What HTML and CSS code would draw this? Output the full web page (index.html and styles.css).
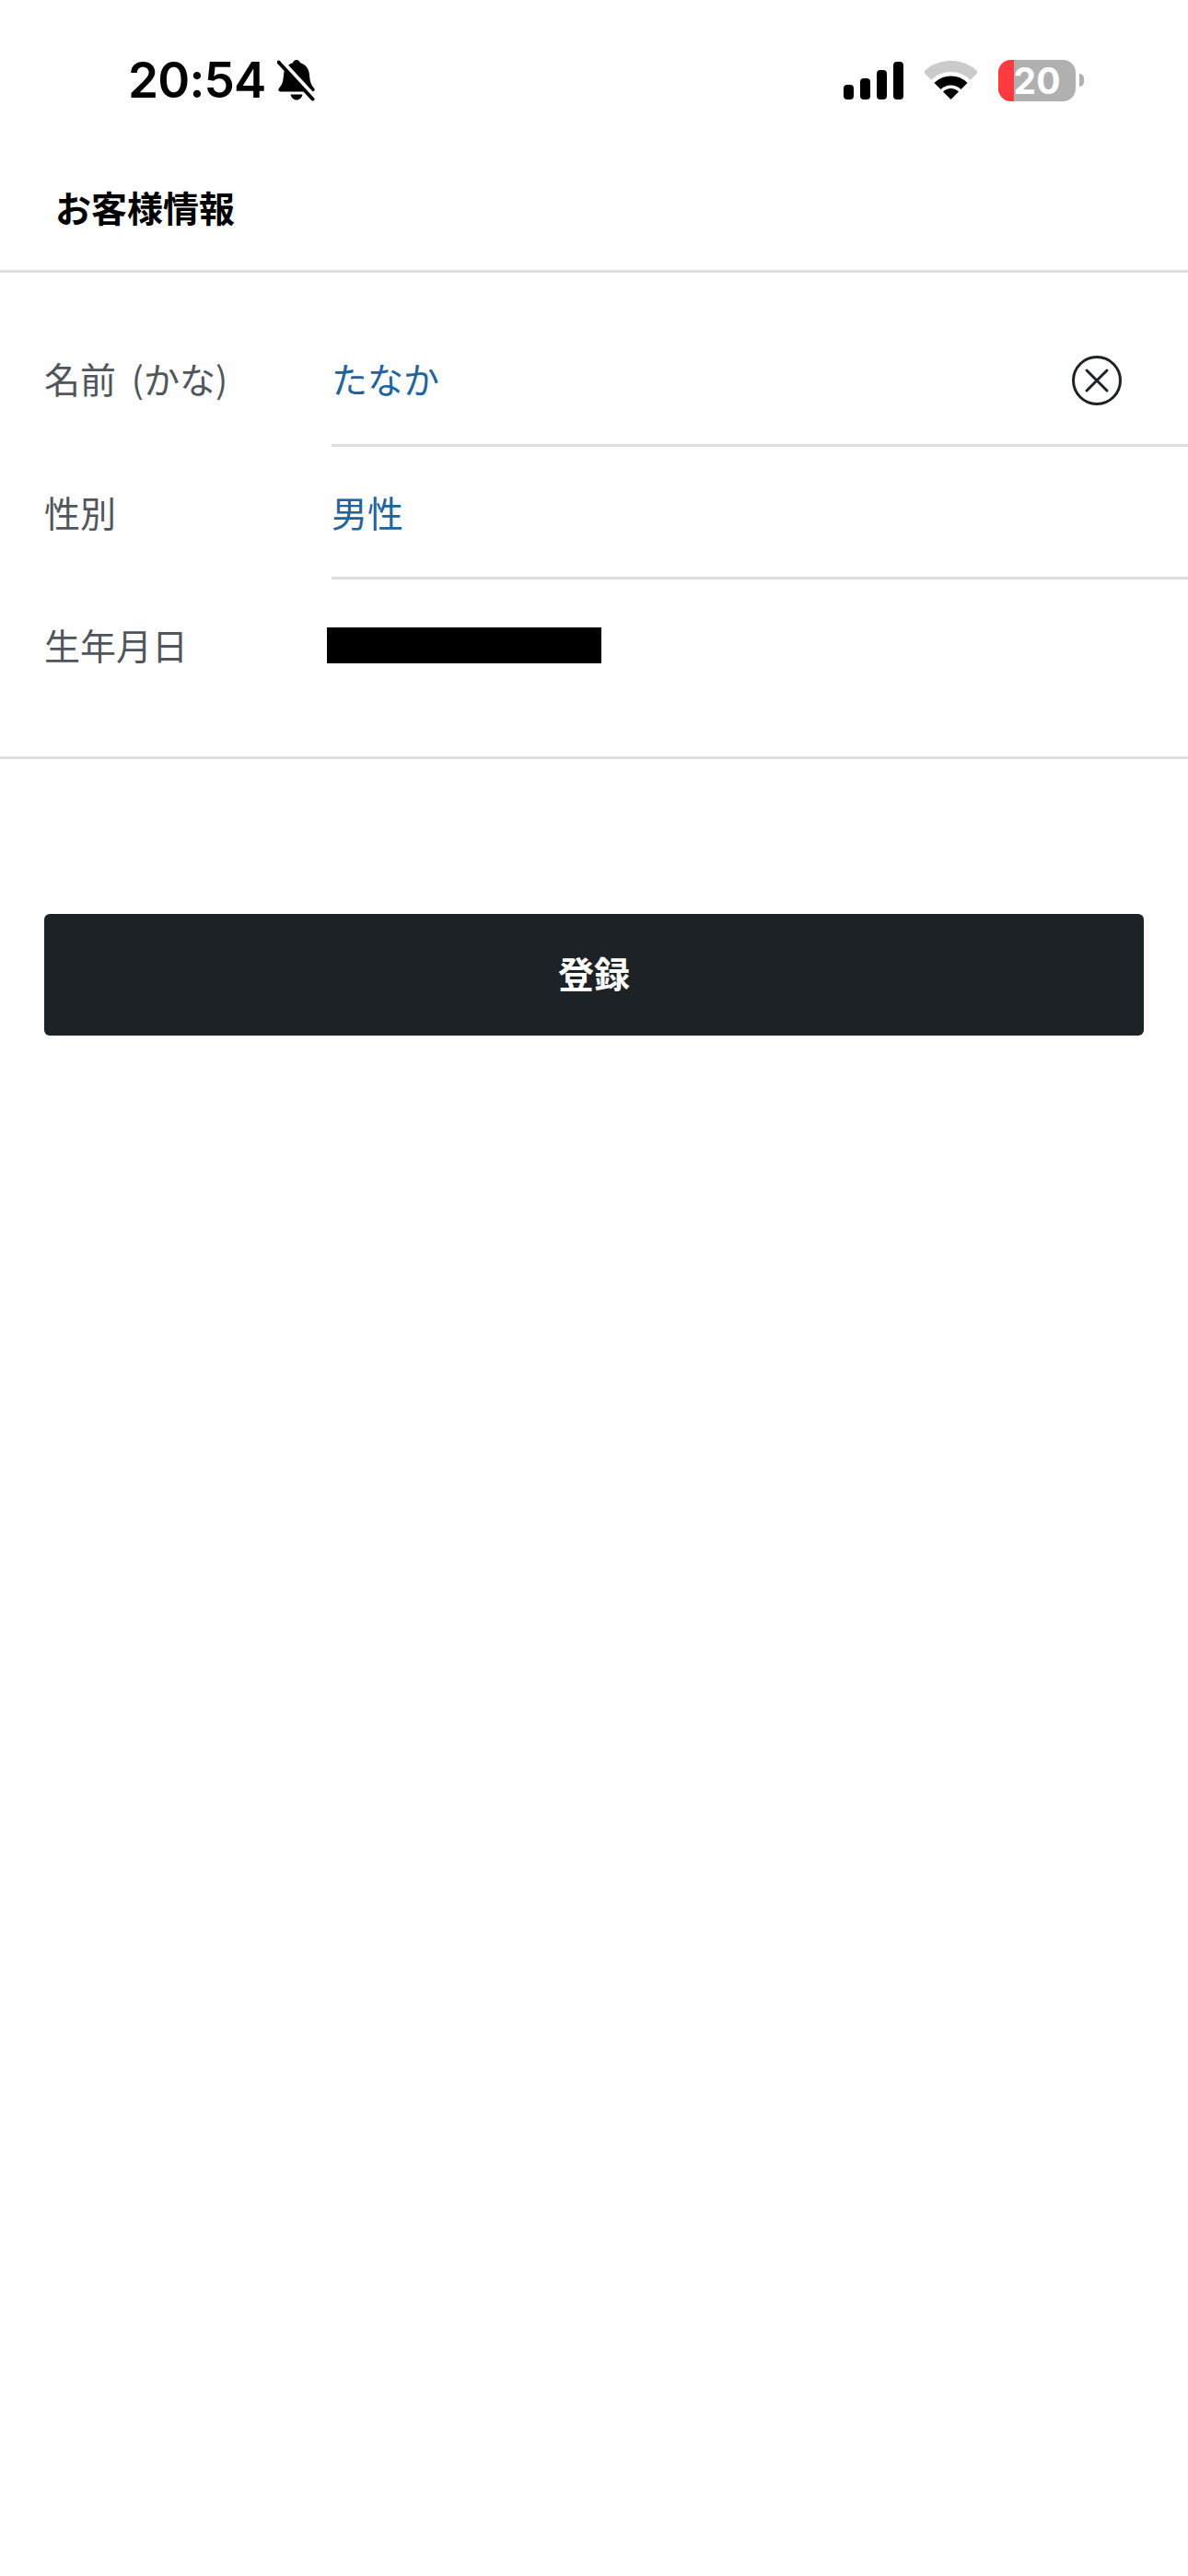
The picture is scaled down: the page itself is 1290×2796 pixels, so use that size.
FILE: index.html
```html
<!DOCTYPE html>
<html lang="ja">
<head>
    <meta charset="UTF-8">
    <meta name="viewport" content="width=device-width, initial-scale=1.0">
    <title>お客様情報</title>
    <link rel="stylesheet" href="styles.css">
</head>
<body>
    <!-- Status bar -->
    <div class="status-bar">
        <div class="status-left">
            <span class="time">20:54</span>
            <svg class="bell" viewBox="0 0 42 46">
                <path d="M21 1c2 0 3.500 1.300 4 3.300 6.500 1.700 9.500 7 10 13 .5 7 1.500 10.500 5 14.500 1.300 1.600.5 3.700-1.700 3.700H3.700C1.500 35.500.7 33.400 2 31.800c3.500-4 4.500-7.500 5-14.500.5-6 3.500-11.300 10-13C17.500 2.300 19 1 21 1z"/>
                <path d="M14.500 38.500h13c-.7 3.500-3.300 6-6.500 6s-5.800-2.500-6.500-6z"/>
                <path class="bell-gap" d="M3 2l37 40"/>
                <path class="bell-slash" d="M1.500 3.500l37 40"/>
            </svg>
        </div>
        <div class="status-right">
            <svg class="signal" viewBox="0 0 65 41">
                <rect x="0" y="25" width="11" height="16" rx="4"/>
                <rect x="18" y="18" width="11" height="23" rx="4"/>
                <rect x="36" y="9" width="11" height="32" rx="4"/>
                <rect x="54" y="0" width="11" height="41" rx="4"/>
            </svg>
            <svg class="wifi" viewBox="0 0 57 42">
                <path class="wifi-far" d="M3 16.500A36 36 0 0 1 54 16.500"/>
                <path class="wifi-mid" d="M14 27.500A20.500 20.500 0 0 1 43 27.500"/>
                <path d="M28.500 42L20 33.500A12 12 0 0 1 37 33.500Z"/>
            </svg>
            <div class="battery">
                <div class="battery-body">
                    <div class="battery-level"></div>
                    <span class="battery-text">20</span>
                </div>
                <div class="battery-cap"></div>
            </div>
        </div>
    </div>

    <h1 class="page-title">お客様情報</h1>

    <!-- Customer form -->
    <div class="info-list">
        <div class="info-row">
            <div class="info-label">名前 (かな)</div>
            <div class="info-value has-line name-value">
                <span>たなか</span>
                <svg class="clear-icon" viewBox="0 0 54 54">
                    <circle cx="27" cy="27" r="25.500"/>
                    <path d="M16 16l22 22M38 16L16 38"/>
                </svg>
            </div>
        </div>
        <div class="info-row">
            <div class="info-label">性別</div>
            <div class="info-value has-line">男性</div>
        </div>
        <div class="info-row">
            <div class="info-label">生年月日</div>
            <div class="info-value last-value"><div class="redacted"></div></div>
        </div>
    </div>

    <div class="actions">
        <button class="submit-btn" type="button">登録</button>
    </div>
</body>
</html>
```

FILE: styles.css
```css
body {
    margin: 0;
    height: 2796px;
    background-color: #fefefe;
    font-family: "Noto Sans CJK JP", "Noto Sans", sans-serif;
}
.status-bar {
    display: flex;
    justify-content: space-between;
    align-items: center;
    height: 90px;
    padding: 42px 113px 0 139px;
}
.status-left {
    display: flex;
    align-items: center;
    gap: 12px;
}
.time {
    font-family: Inter, sans-serif;
    font-size: 53px;
    font-weight: 600;
    letter-spacing: -0.8px;
    line-height: 90px;
    color: #000;
}
.bell {
    width: 42px;
    height: 46px;
    fill: #000;
}
.bell-gap {
    fill: none;
    stroke: #fefefe;
    stroke-width: 7;
}
.bell-slash {
    fill: none;
    stroke: #000;
    stroke-width: 4;
    stroke-linecap: round;
}
.status-right {
    display: flex;
    align-items: center;
    gap: 23px;
}
.signal {
    width: 65px;
    height: 41px;
    fill: #000;
}
.wifi {
    width: 57px;
    height: 42px;
    fill: #000;
}
.wifi-far {
    fill: none;
    stroke: #cbcbcb;
    stroke-width: 12;
}
.wifi-mid {
    fill: none;
    stroke: #000;
    stroke-width: 10;
}
.battery {
    display: flex;
    align-items: center;
    gap: 4px;
}
.battery-body {
    display: flex;
    justify-content: center;
    align-items: center;
    position: relative;
    overflow: hidden;
    width: 84px;
    height: 45px;
    border-radius: 14px;
    background: #b0b0b0;
}
.battery-level {
    position: absolute;
    left: 0;
    top: 0;
    bottom: 0;
    width: 17px;
    background: #ff3b3f;
}
.battery-text {
    position: relative;
    font-family: Inter, sans-serif;
    font-size: 39px;
    font-weight: 700;
    line-height: 45px;
    color: #fff;
}
.battery-cap {
    width: 5px;
    height: 14px;
    border-radius: 0 7px 7px 0;
    background: #b0b0b0;
}
.page-title {
    margin: 0;
    height: 134px;
    padding: 27px 0 0 60px;
    border-bottom: 3px solid #dedede;
    font-size: 39px;
    font-weight: 700;
    line-height: 130px;
    color: #000;
}
.info-list {
    border-bottom: 3px solid #dedede;
    padding-top: 44px;
}
.info-row {
    display: flex;
}
.info-label {
    width: 312px;
    margin-left: 48px;
    padding-top: 47px;
    font-size: 39px;
    word-spacing: 8px;
    line-height: 46px;
    color: #50565b;
}
.info-value {
    flex: 1;
    display: flex;
    justify-content: space-between;
    padding: 47px 0 48px;
    font-size: 39px;
    line-height: 46px;
    color: #22639b;
}
.has-line {
    border-bottom: 3px solid #dedede;
}
.name-value {
    padding-bottom: 49px;
}
.last-value {
    height: 145px;
    padding-bottom: 0;
}
.redacted {
    width: 298px;
    height: 39px;
    margin: 5px 0 0 -5px;
    background: #000;
}
.clear-icon {
    width: 54px;
    height: 54px;
    margin: -1px 72px -7px 0;
    fill: none;
    stroke: #1c2226;
    stroke-width: 3;
    stroke-linecap: round;
}
.actions {
    padding: 168px 48px 0;
}
.submit-btn {
    display: block;
    width: 100%;
    height: 132px;
    padding: 0 0 6px;
    background: #1c2226;
    color: #fff;
    border: none;
    border-radius: 6px;
    font-family: inherit;
    font-size: 39px;
    font-weight: 700;
    cursor: pointer;
}
```
